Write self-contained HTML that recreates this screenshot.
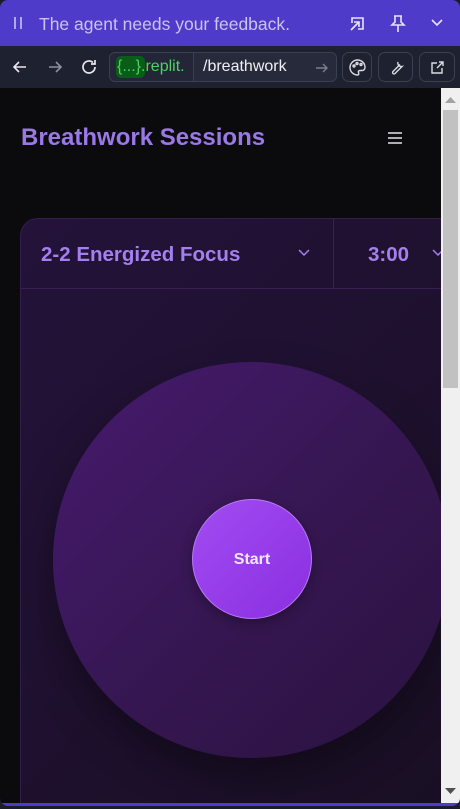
<!DOCTYPE html>
<html><head><meta charset="utf-8"><style>
*{margin:0;padding:0;box-sizing:border-box}
body{width:460px;height:809px;background:#1a1d2a;font-family:"Liberation Sans",sans-serif;overflow:hidden;position:relative}
.frame{position:absolute;left:0;top:0;width:460px;height:806px;background:#4f3bc9;border-radius:8px;overflow:hidden}
.top{position:absolute;left:0;top:0;width:460px;height:46px;color:#c9c3f0;font-size:17.5px}
.top .t{position:absolute;left:39px;top:14px}
.bar{position:absolute;left:0;top:46px;width:460px;height:42px;background:#1d2130}
.btn{position:absolute;top:6px;height:30px;border:1px solid #3a3f52;border-radius:7px}
.url{position:absolute;left:109px;top:6px;width:228px;height:30px;border:1px solid #3a3f52;border-radius:6px;background:#222636;overflow:hidden}
.content{position:absolute;left:0;top:88px;width:441px;height:715px;background:#0b0b0e;overflow:hidden}
.sb{position:absolute;left:441px;top:88px;width:19px;height:715px;background:#f0f0f0}
.card{position:absolute;left:20px;top:130px;width:460px;height:620px;border-radius:18px;border:1px solid #32204a;background:linear-gradient(135deg,#24123a,#180f22);overflow:hidden}
.title{position:absolute;left:21px;top:36px;font-family:"Liberation Sans",sans-serif;font-size:24px;color:#9a78e6;font-weight:bold;letter-spacing:0px}
.sel{font-family:"Liberation Sans",sans-serif;font-weight:bold;color:#a380ee;font-size:20.5px;position:absolute;top:24px}
</style></head><body>
<div class="frame">
 <div class="top">
  <svg style="position:absolute;left:13px;top:16px" width="10" height="14"><path d="M2 1v12M8 1v12" stroke="#c9c3f0" stroke-width="1.6"/></svg>
  <span class="t">The agent needs your feedback.</span>
  <svg style="position:absolute;left:349px;top:15px" width="17" height="17" fill="none" stroke="#e6e3f7" stroke-width="1.6"><path d="M3 8V3h11v11H9"/><path d="M2 15l8-8M5 7h5v5"/></svg>
  <svg style="position:absolute;left:390px;top:14px" width="16" height="19" fill="none" stroke="#e6e3f7" stroke-width="1.6"><path d="M4 2h8M5 2v6l-3 3h12l-3-3V2M8 11v7"/></svg>
  <svg style="position:absolute;left:430px;top:18px" width="14" height="10" fill="none" stroke="#e6e3f7" stroke-width="1.6"><path d="M2 2l5 5 5-5"/></svg>
 </div>
 <div class="bar">
  <svg style="position:absolute;left:12px;top:13px" width="16" height="16" fill="none" stroke="#e8e8ee" stroke-width="1.6"><path d="M14 8H2M7 3L2 8l5 5"/></svg>
  <svg style="position:absolute;left:47px;top:13px" width="16" height="16" fill="none" stroke="#8c90a0" stroke-width="1.6"><path d="M2 8h12M9 3l5 5-5 5"/></svg>
  <svg style="position:absolute;left:80px;top:12px" width="18" height="18" fill="none" stroke="#e8e8ee" stroke-width="1.7"><path d="M15 9a6 6 0 1 1-2-4.5M15 2v4h-4"/></svg>
  <div class="url">
   <div style="position:absolute;left:6px;top:3px;width:29px;height:22px;background:#0a5d18;border-radius:5px"></div>
   <span style="position:absolute;left:7px;top:5px;color:#4fd163;font-size:16px">{...}.replit.</span>
   <div style="position:absolute;left:83px;top:0;width:150px;height:30px;background:#262a3a;border-left:1px solid #3a3f52"></div>
   <span style="position:absolute;left:93px;top:5px;color:#f0f0f4;font-size:16px">/breathwork</span>
   <svg style="position:absolute;left:205px;top:8px" width="14" height="14" fill="none" stroke="#7a7f90" stroke-width="1.4"><path d="M1 7h11M8 3l4 4-4 4"/></svg>
  </div>
  <div class="btn" style="left:342px;width:30px"><svg style="position:absolute;left:5px;top:5px" width="19" height="19" fill="none" stroke="#dcdde4" stroke-width="1.4"><path d="M9.5 2a7.5 7.5 0 1 0 0 15c1.5 0 1.5-1.5 1-2.5s0-2 1.5-2h2a3 3 0 0 0 3-3C17 5 13.5 2 9.5 2z"/><circle cx="6" cy="8" r="1"/><circle cx="9" cy="5.5" r="1"/><circle cx="13" cy="6.5" r="1"/></svg></div>
  <div class="btn" style="left:378px;width:35px"><svg style="position:absolute;left:10px;top:7px" width="15" height="15" fill="none" stroke="#dcdde4" stroke-width="1.4"><path d="M9 2a3.5 3.5 0 0 0 4 4.5L6 13.5a1.4 1.4 0 0 1-2-2L11 4.5"/></svg></div>
  <div class="btn" style="left:419px;width:36px"><svg style="position:absolute;left:10px;top:7px" width="15" height="15" fill="none" stroke="#dcdde4" stroke-width="1.4"><path d="M7 3H2v10h10V8M9 2h4v4M13 2L7 8"/></svg></div>
 </div>
 <div class="content">
  <div class="title">Breathwork Sessions</div>
  <svg style="position:absolute;left:387px;top:43px" width="16" height="14" fill="none" stroke="#e6e6ea" stroke-width="1.6"><path d="M1 2h14M1 7h14M1 12h14"/></svg>
  <div class="card">
   <div style="position:absolute;left:0;top:69px;width:460px;height:1px;background:#3a2052"></div>
   <div style="position:absolute;left:312px;top:0;width:1px;height:69px;background:#3a2052"></div>
   <div class="sel" style="left:20px">2-2 Energized Focus</div>
   <svg style="position:absolute;left:277px;top:30px" width="12" height="8" fill="none" stroke="#a380ee" stroke-width="1.5"><path d="M1 1l5 5 5-5"/></svg>
   <div class="sel" style="left:347px">3:00</div>
   <svg style="position:absolute;left:411px;top:30px" width="12" height="8" fill="none" stroke="#a380ee" stroke-width="1.5"><path d="M1 1l5 5 5-5"/></svg>
   <div style="position:absolute;left:32px;top:143px;width:396px;height:396px;border-radius:50%;background:linear-gradient(135deg,#461a6e,#34164e 60%,#2a1240);box-shadow:0 20px 40px rgba(0,0,0,.35)"></div>
   <div style="position:absolute;left:171px;top:280px;width:120px;height:120px;border-radius:50%;background:linear-gradient(135deg,#a24cf2,#8a2fe0);border:1px solid #b77af5;box-shadow:0 4px 12px rgba(0,0,0,.3);color:#f1e8fb;font-family:'Liberation Sans',sans-serif;font-weight:bold;font-size:16px;text-align:center;line-height:120px">Start</div>
  </div>
 </div>
 <div class="sb">
  <svg style="position:absolute;left:4px;top:9px" width="11" height="6"><path d="M0 6L5.5 0 11 6z" fill="#a3a3a3"/></svg>
  <div style="position:absolute;left:2px;top:22px;width:15px;height:278px;background:#c1c1c1"></div>
  <svg style="position:absolute;left:4px;top:700px" width="11" height="6"><path d="M0 0L5.5 6 11 0z" fill="#505050"/></svg>
 </div>
</div>
</body></html>
